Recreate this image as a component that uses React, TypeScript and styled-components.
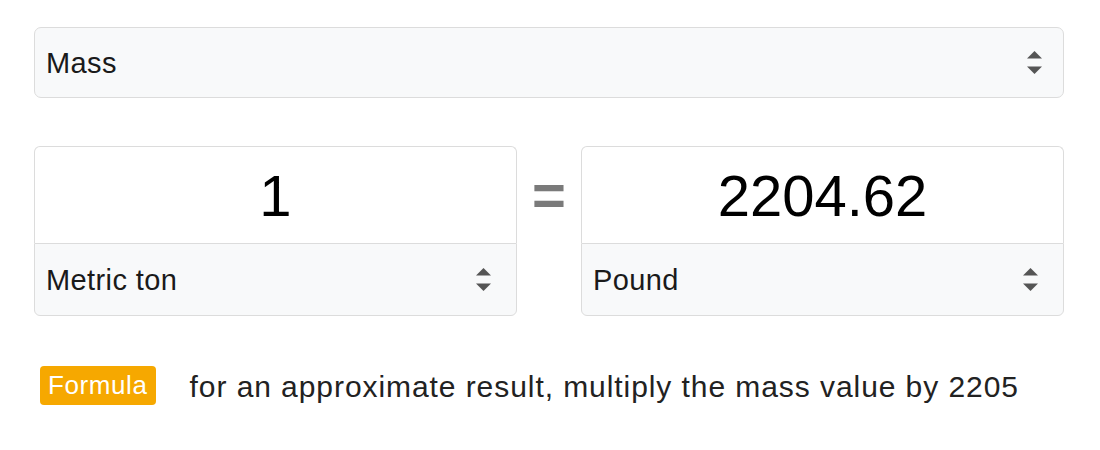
import React from "react";
import styled, { createGlobalStyle } from "styled-components";

const GlobalStyle = createGlobalStyle`
  html, body {
    margin: 0;
    padding: 0;
    background: #fff;
    font-family: "Liberation Sans", Arial, sans-serif;
  }
`;

const Page = styled.div`
  width: 1030px;
  padding: 27px 36px 0 34px;
`;

const SelectWrap = styled.div<{ $height: number; $attached?: boolean }>`
  position: relative;
  height: ${(p) => p.$height}px;
  box-sizing: border-box;
  border: 1.5px solid #dcdcdc;
  border-radius: ${(p) => (p.$attached ? "0 0 6px 6px" : "7px")};
  background: #f8f9fa;
  ${(p) => (p.$attached ? "border-top-width: 1px;" : "")}
`;

const NativeSelect = styled.select`
  appearance: none;
  -webkit-appearance: none;
  width: 100%;
  height: 100%;
  border: none;
  background: transparent;
  padding: 0 60px 0 11px;
  font-family: "Liberation Sans", Arial, sans-serif;
  font-size: 29px;
  letter-spacing: 0.4px;
  color: #1a1a1a;
  outline: none;
`;

const Arrows = styled.svg<{ $right: number }>`
  position: absolute;
  right: ${(p) => p.$right}px;
  top: 50%;
  transform: translateY(-50%);
  pointer-events: none;
`;

const Converter = styled.div`
  display: grid;
  grid-template-columns: 1fr 33px 1fr;
  column-gap: 15.5px;
  align-items: start;
  margin-top: 48px;
`;

const Card = styled.div`
  display: flex;
  flex-direction: column;
`;

const ValueInput = styled.input`
  height: 97px;
  box-sizing: border-box;
  border: 1.5px solid #dcdcdc;
  border-bottom: none;
  border-radius: 6px 6px 0 0;
  background: #fff;
  text-align: center;
  font-family: "Liberation Sans", Arial, sans-serif;
  font-size: 58px;
  color: #000;
  padding: 0;
  outline: none;
  width: 100%;
`;

const Equals = styled.div`
  height: 97px;
  display: flex;
  align-items: center;
  justify-content: center;
  font-size: 58px;
  font-weight: bold;
  color: #7a7a7a;
  line-height: 1;
`;

const FormulaRow = styled.div`
  display: flex;
  align-items: center;
  gap: 34px;
  margin-top: 50px;
  padding-left: 6px;
`;

const Badge = styled.span`
  display: inline-flex;
  align-items: center;
  height: 39px;
  padding: 0 8px;
  border-radius: 4px;
  background: #f6a800;
  color: #fff;
  font-size: 26px;
  letter-spacing: 0.6px;
`;

const Note = styled.span`
  font-size: 30px;
  letter-spacing: 0.93px;
  color: #222;
  padding-top: 3px;
`;

const UpDown = ({ right }: { right: number }) => (
  <Arrows $right={right} width="17" height="24" viewBox="0 0 17 24">
    <path d="M8.5 0 L16 7.5 L1 7.5 Z" fill="#555" />
    <path d="M1 15.5 L16 15.5 L8.5 23 Z" fill="#555" />
  </Arrows>
);

type UnitCardProps = {
  value: string;
  unit: string;
};

const UnitCard = (props: UnitCardProps) => {
  const { value, unit } = props;
  return (
    <Card>
      <ValueInput defaultValue={value} />
      <SelectWrap $height={73} $attached>
        <NativeSelect defaultValue={unit}>
          <option>{unit}</option>
        </NativeSelect>
        <UpDown right={24} />
      </SelectWrap>
    </Card>
  );
};

export default function App() {
  return (
    <>
      <GlobalStyle />
      <Page>
        <SelectWrap $height={71}>
          <NativeSelect defaultValue="Mass">
            <option>Mass</option>
            <option>Length</option>
            <option>Temperature</option>
          </NativeSelect>
          <UpDown right={20} />
        </SelectWrap>
        <Converter>
          <UnitCard value="1" unit="Metric ton" />
          <Equals>=</Equals>
          <UnitCard value="2204.62" unit="Pound" />
        </Converter>
        <FormulaRow>
          <Badge>Formula</Badge>
          <Note>for an approximate result, multiply the mass value by 2205</Note>
        </FormulaRow>
      </Page>
    </>
  );
}
